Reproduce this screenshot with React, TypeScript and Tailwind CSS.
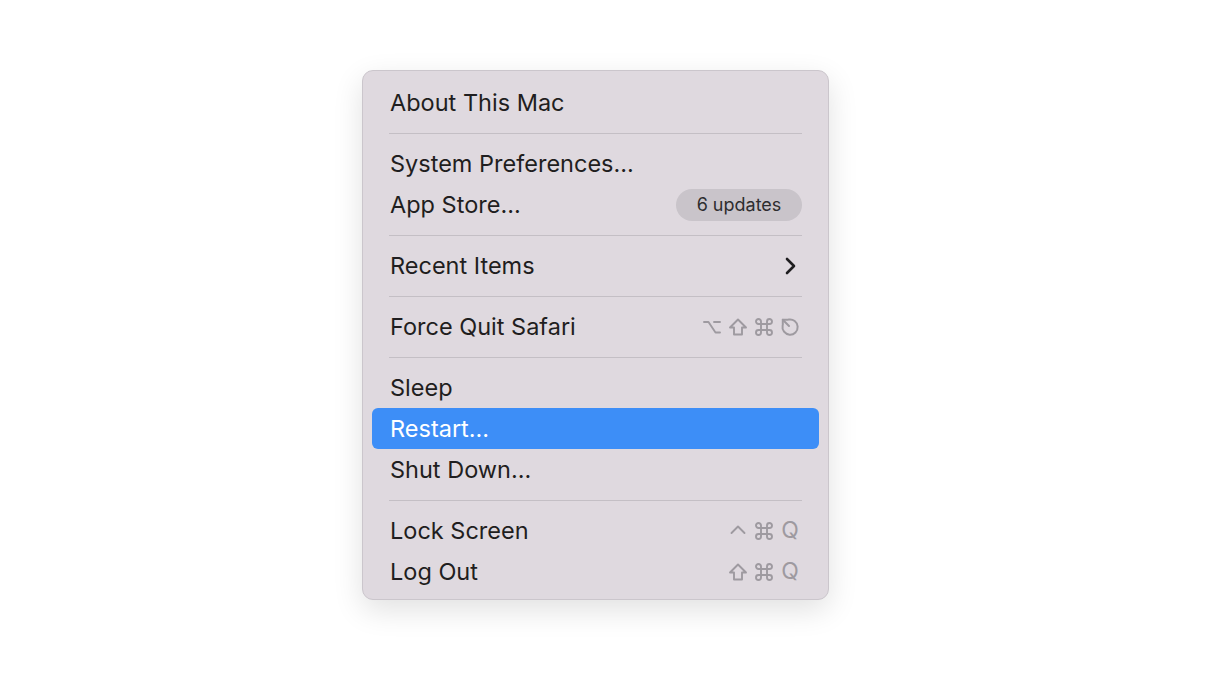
import React from "react";

const KEY = "#9e9aa0";

const Option = () => (
  <svg width="20" height="20" viewBox="0 0 20 20" fill="none" stroke={KEY} strokeWidth="1.9" strokeLinecap="round" strokeLinejoin="round">
    <path d="M2 5H6.5L13.5 15.5H18" />
    <path d="M12 5H18" />
  </svg>
);

const Shift = () => (
  <svg width="20" height="20" viewBox="0 0 20 20" fill="none" stroke={KEY} strokeWidth="1.9" strokeLinejoin="round">
    <path d="M10 2.5L18 10.5H14V17.5H6V10.5H2Z" />
  </svg>
);

const Command = () => (
  <svg width="20" height="20" viewBox="0 0 20 20" fill="none" stroke={KEY} strokeWidth="1.9" strokeLinejoin="round">
    <path d="M7 7H13V13H7Z" />
    <path d="M7 7V4.5A2.5 2.5 0 1 0 4.5 7H7" />
    <path d="M13 7V4.5A2.5 2.5 0 1 1 15.5 7H13" />
    <path d="M13 13V15.5A2.5 2.5 0 1 0 15.5 13H13" />
    <path d="M7 13V15.5A2.5 2.5 0 1 1 4.5 13H7" />
  </svg>
);

const Escape = () => (
  <svg width="20" height="20" viewBox="0 0 20 20" fill="none" stroke={KEY} strokeWidth="2" strokeLinecap="round" strokeLinejoin="round">
    <path d="M8.6 2.6A7.6 7.6 0 1 1 2.6 8.6" />
    <path d="M2.8 2.8L9 9" />
    <path d="M2.8 7.6V2.8H7.6" />
  </svg>
);

const Control = () => (
  <svg width="20" height="20" viewBox="0 0 20 20" fill="none" stroke={KEY} strokeWidth="1.9" strokeLinecap="round" strokeLinejoin="round">
    <path d="M3.5 12L10 5.5L16.5 12" />
  </svg>
);

const Q = () => (
  <span className="w-[20px] text-center text-[23px] leading-none text-[#9e9aa0]">Q</span>
);

const Chevron = () => (
  <svg width="20" height="20" viewBox="0 0 20 20" fill="none" stroke="#1f1e20" strokeWidth="2.6" strokeLinecap="round" strokeLinejoin="round">
    <path d="M7 3L14 10L7 17" />
  </svg>
);

const Keys = ({ children }: { children: React.ReactNode }) => (
  <div className="flex items-center gap-[6px]">{children}</div>
);

const Row = ({
  label,
  active,
  right,
}: {
  label: string;
  active?: boolean;
  right?: React.ReactNode;
}) => (
  <div
    className={`flex h-[41px] items-center justify-between rounded-[6px] pl-[18px] pr-[19px] ${
      active ? "bg-[#3d8ef7] text-white" : "text-[#1f1e20]"
    }`}
  >
    <span className="text-[23.5px] leading-none">{label}</span>
    {right}
  </div>
);

const Separator = () => (
  <div className="flex h-[20px] items-center px-[17px]">
    <div className="h-px w-full bg-[#c4bfc5]" />
  </div>
);

export default function App() {
  return (
    <div className="min-h-[697px] w-full bg-white pt-[70px] pl-[362px]" style={{ fontFamily: "Inter, 'Liberation Sans', sans-serif" }}>
      <div className="w-[467px] rounded-[11px] border border-[#cbc6cc] bg-[#dfd9df] px-[9px] pt-[11px] pb-[7px] shadow-[0_10px_30px_rgba(0,0,0,0.12)]">
        <Row label="About This Mac" />
        <Separator />
        <Row label="System Preferences..." />
        <Row
          label="App Store..."
          right={
            <span className="-mr-[2px] flex h-[32px] w-[126px] items-center justify-center rounded-full bg-[#c9c4ca] text-[18px] text-[#2e2d2f]">
              6 updates
            </span>
          }
        />
        <Separator />
        <Row label="Recent Items" right={<Chevron />} />
        <Separator />
        <Row
          label="Force Quit Safari"
          right={
            <Keys>
              <Option />
              <Shift />
              <Command />
              <Escape />
            </Keys>
          }
        />
        <Separator />
        <Row label="Sleep" />
        <Row label="Restart..." active />
        <Row label="Shut Down..." />
        <Separator />
        <Row
          label="Lock Screen"
          right={
            <Keys>
              <Control />
              <Command />
              <Q />
            </Keys>
          }
        />
        <Row
          label="Log Out"
          right={
            <Keys>
              <Shift />
              <Command />
              <Q />
            </Keys>
          }
        />
      </div>
    </div>
  );
}
